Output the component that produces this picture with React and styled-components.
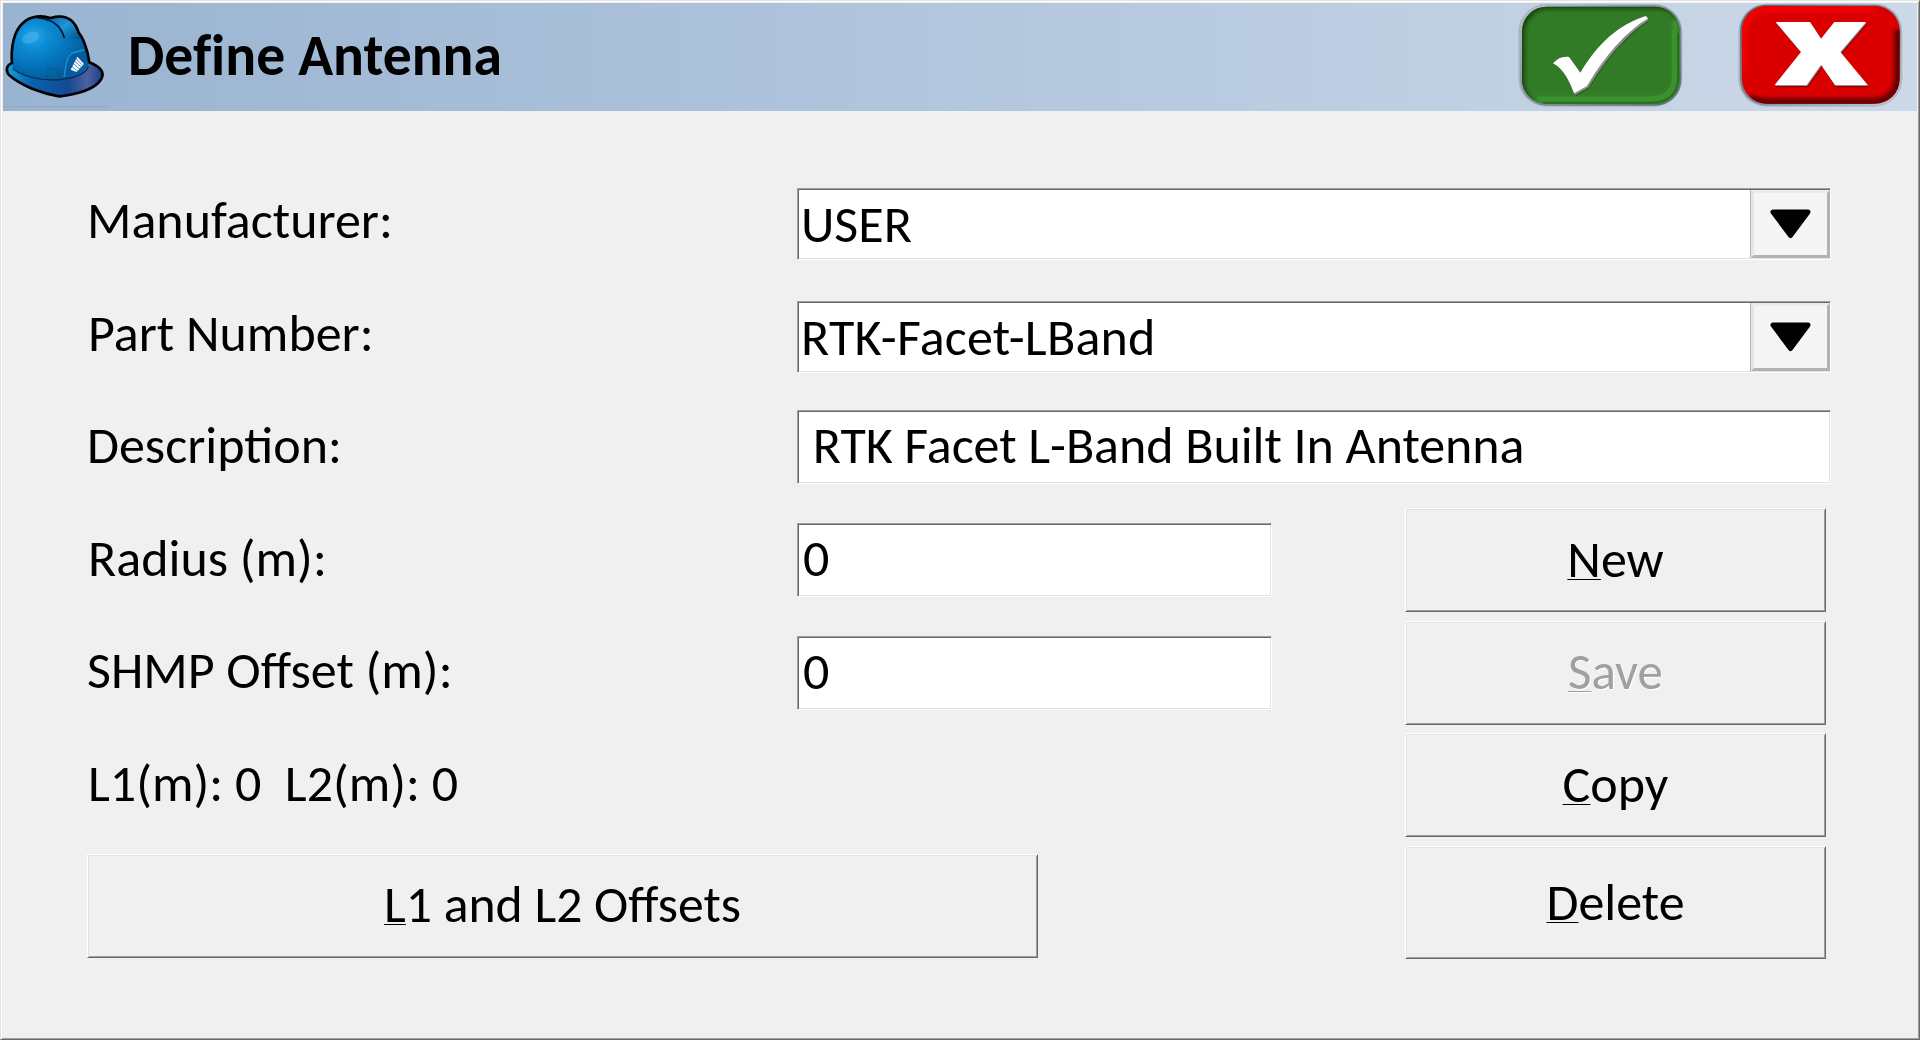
import React from "react";
import styled, { createGlobalStyle, css } from "styled-components";

const GlobalStyle = createGlobalStyle`
  *, *::before, *::after { box-sizing: border-box; }
  body {
    margin: 0;
    background: #f0f0f0;
    color: #000;
    font-family: Calibri, Carlito, Lato, sans-serif;
  }
  button, input { font: inherit; color: inherit; }
`;

const raised = css`
  border: 1px solid;
  border-color: #fff #696969 #696969 #fff;
  box-shadow: inset 1px 1px 0 #e3e3e3, inset -1px -1px 0 #a0a0a0;
`;

const sunken = css`
  border: 1px solid;
  border-color: #a0a0a0 #fff #fff #a0a0a0;
  box-shadow: inset 1px 1px 0 #696969, inset -1px -1px 0 #e3e3e3;
`;

const Window = styled.main`
  display: flex;
  flex-direction: column;
  width: 1920px;
  height: 1040px;
  padding: 2px;
  background: #f0f0f0;
  border: 1px solid;
  border-color: #e3e3e3 #696969 #696969 #e3e3e3;
  box-shadow: inset 1px 1px 0 #fff, inset -1px -1px 0 #a0a0a0;
  overflow: hidden;
`;

const TitleBar = styled.header`
  display: flex;
  flex: none;
  height: 108px;
  padding-right: 13px;
  background: linear-gradient(90deg, #99b4d1 0%, #9fb8d4 12%, #ccd9e9 100%);
`;

const Title = styled.h1`
  flex: 1;
  margin: 0 0 0 -2px;
  font-size: 57.6px;
  font-weight: 700;
  line-height: 104px;
  white-space: nowrap;
  font-variant-ligatures: none;
`;

const TitleActions = styled.div`
  display: flex;
  gap: 53px;
`;

const TitleButton = styled.button`
  display: block;
  width: 167px;
  height: 105px;
  padding: 0;
  border: 0;
  background: none;

  svg { display: block; }
`;

const Form = styled.form`
  display: flex;
  flex-direction: column;
  padding: 77px 86px 0 84px;
  font-size: 52px;
`;

const Row = styled.div`
  display: grid;
  grid-template-columns: 710px 1fr;
  align-items: start;
  height: ${(p) => p.$height}px;
`;

const Label = styled.label`
  height: ${(p) => p.$line}px;
  padding-left: ${(p) => p.$inset || 0}px;
  line-height: ${(p) => p.$line}px;
  white-space: pre;
`;

const Field = styled.div`
  ${sunken}
  display: flex;
  width: ${(p) => (p.$short ? "475px" : "100%")};
  height: ${(p) => (p.$combo ? 72 : 74)}px;
  padding: 1px 0 1px ${(p) => (p.$short ? 5 : 3)}px;
  line-height: ${(p) => (p.$combo ? 69 : 67)}px;
  background: #fff;
  white-space: pre;
`;

const Value = styled.span`
  flex: 1;
  letter-spacing: ${(p) => p.$spacing || 0}px;
`;

const DropButton = styled.button`
  display: grid;
  place-items: center;
  width: 79px;
  height: 68px;
  padding: 0;
  background: #f5f5f5;
  border: 3px solid;
  border-color: #ebebeb #b2b2b2 #b2b2b2 #e3e6ea;
  box-shadow: -1px 0 0 #b4b4b4;
`;

const Lower = styled.div`
  display: flex;
  justify-content: space-between;
  padding-right: 5px;
`;

const Details = styled.div`
  display: flex;
  flex-direction: column;
  padding-top: 15px;
`;

const Actions = styled.div`
  display: flex;
  flex-direction: column;
  gap: 9px;
  width: 421px;
`;

const PushButton = styled.button`
  ${raised}
  display: flex;
  justify-content: center;
  width: ${(p) => p.$width || 421}px;
  height: ${(p) => p.$height || 104}px;
  margin-top: ${(p) => p.$shift || 0}px;
  padding: 0;
  background: #f0f0f0;
  font-size: ${(p) => p.$size || 52}px;
  line-height: ${(p) => p.$line || 100}px;
  white-space: pre;

  &:disabled {
    color: #a0a0a0;
    text-shadow: 1px 1px 0 #fff;
  }
`;

const Key = styled.span`
  text-decoration: underline;
  text-decoration-thickness: 1px;
  text-decoration-skip-ink: none;
  text-underline-offset: 2px;
`;

const helmetOutline =
  "M36 189C18 196 16 214 28 226C62 256 122 280 178 289C230 284 284 268 302 240C316 218 304 202 268 187C264 150 248 112 236 98C226 66 204 46 172 50C162 50 156 54 150 54C128 46 92 46 68 70C42 94 32 140 36 189Z";

const HelmetIcon = () => (
  <svg width="127" height="108" viewBox="9 9 381 324" aria-hidden="true">
    <defs>
      <radialGradient id="shell" cx="0.28" cy="0.3" r="0.8">
        <stop offset="0" stopColor="#2ba6e8" />
        <stop offset="0.25" stopColor="#0c8cd4" />
        <stop offset="0.6" stopColor="#0472b9" />
        <stop offset="1" stopColor="#03548f" />
      </radialGradient>
      <linearGradient id="brim" x1="0" y1="0" x2="1" y2="0">
        <stop offset="0" stopColor="#12a0e4" />
        <stop offset="0.25" stopColor="#0b62ad" />
        <stop offset="0.65" stopColor="#154a92" />
        <stop offset="0.84" stopColor="#4f5fa2" />
        <stop offset="1" stopColor="#1d3f86" />
      </linearGradient>
      <linearGradient id="ridge" x1="0" y1="0" x2="1" y2="1">
        <stop offset="0" stopColor="#0a6aa8" />
        <stop offset="0.45" stopColor="#1c98dc" />
        <stop offset="1" stopColor="#034f88" />
      </linearGradient>
    </defs>
    <path d="M9 320H320" stroke="#8ca6c8" strokeWidth="3" />
    <path d={helmetOutline} fill="url(#brim)" />
    <path
      d="M38 192C34 140 44 96 70 72C94 50 128 50 150 57C170 50 200 50 216 70C240 104 262 150 265 190C262 212 236 226 192 236C130 246 70 232 38 206Z"
      fill="url(#shell)"
    />
    <path d="M150 56C172 50 200 52 214 68C230 88 240 104 240 116C220 118 206 110 194 114C190 90 176 66 150 56Z" fill="url(#ridge)" />
    <path d="M112 54C150 56 182 72 193 114" fill="none" stroke="#00182c" strokeWidth="5" />
    <ellipse cx="92" cy="113" rx="27" ry="16" fill="#58bdf0" opacity="0.4" transform="rotate(-22 92 113)" />
    <path d="M192 234C198 190 202 166 218 158L252 150C260 168 264 184 262 204C244 222 220 232 192 234Z" fill="#075c9f" />
    <path d="M192 232C198 190 202 166 218 159L252 150" fill="none" stroke="#1297da" strokeWidth="4" />
    <path d="M38 206C70 232 130 244 188 238C194 232 194 236 200 236C232 230 260 220 265 200" fill="none" stroke="#012b52" strokeWidth="3.5" />
    <path d="M143 236V208H178V236M70 210V228" fill="none" stroke="#05568f" strokeWidth="2.5" />
    <path d={helmetOutline} fill="none" stroke="#000" strokeWidth="8" strokeLinejoin="round" />
    <path d="M232 170L252 192L230 216L212 209Z" fill="#fff" />
    <path d="M219 190L240 208M223 182L244 202M227 175L249 197M216 200L234 214" stroke="#0a5a9c" strokeWidth="2.2" />
  </svg>
);

const AcceptIcon = () => (
  <svg width="167" height="105" viewBox="51 9 501 315" aria-hidden="true">
    <defs>
      <linearGradient id="okRim" x1="0" y1="0" x2="1" y2="1">
        <stop offset="0" stopColor="#b9c0ca" />
        <stop offset="0.45" stopColor="#8b929c" />
        <stop offset="1" stopColor="#5f6c74" />
      </linearGradient>
      <filter id="okSoft" x="-10%" y="-10%" width="120%" height="120%">
        <feGaussianBlur stdDeviation="7" />
      </filter>
      <clipPath id="okClip">
        <rect x="66" y="20" width="473" height="292" rx="74" />
      </clipPath>
    </defs>
    <rect x="55" y="12" width="492" height="308" rx="84" fill="#a9b5c5" />
    <rect x="60" y="15" width="484" height="302" rx="79" fill="url(#okRim)" />
    <rect x="66" y="20" width="473" height="292" rx="74" fill="#327b26" />
    <g clipPath="url(#okClip)">
      <rect x="62" y="14" width="494" height="318" rx="84" fill="none" stroke="#123f0c" strokeWidth="24" filter="url(#okSoft)" />
      <path d="M526 60V240Q526 300 450 300H110" fill="none" stroke="#3f9b31" strokeWidth="14" filter="url(#okSoft)" />
      <path d="M534 100V238Q530 306 454 308H130" fill="none" stroke="#27701d" strokeWidth="6" />
      <path d="M519 90V236Q516 290 450 293H110" fill="none" stroke="#3b942c" strokeWidth="5" />
    </g>
    <path
      d="M164 194C178 178 194 174 212 177L245 222C300 132 364 78 442 52L449 62C386 102 324 172 268 264L227 289C214 250 196 212 164 194Z"
      fill="#1b4d14"
      opacity="0.75"
    />
    <path d="M162 192C176 176 192 174 210 175L243 220C298 130 362 76 440 50L447 60C384 100 322 170 266 262L225 286C212 248 194 210 162 192Z" fill="#8c8c8c" />
    <path d="M159 190C173 174 189 168 207 171L241 218C294 128 360 72 437 48L444 55C380 94 316 164 261 258L222 280C209 244 191 206 159 190Z" fill="#fff" />
  </svg>
);

const crossShape = "M167 66H270L303 116L343 66H438L361 156L443 255H345L303 194L260 255H164L243 156Z";

const CancelIcon = () => (
  <svg width="167" height="105" viewBox="51 9 501 315" aria-hidden="true">
    <defs>
      <linearGradient id="noRim" x1="0" y1="0" x2="1" y2="1">
        <stop offset="0" stopColor="#59636f" />
        <stop offset="0.45" stopColor="#7d8691" />
        <stop offset="1" stopColor="#c3cad3" />
      </linearGradient>
      <filter id="noSoft" x="-10%" y="-10%" width="120%" height="120%">
        <feGaussianBlur stdDeviation="6" />
      </filter>
      <clipPath id="noClip">
        <rect x="66" y="18" width="473" height="293" rx="74" />
      </clipPath>
    </defs>
    <rect x="55" y="11" width="492" height="309" rx="84" fill="#adb8c7" />
    <rect x="60" y="14" width="483" height="303" rx="79" fill="url(#noRim)" />
    <rect x="66" y="18" width="473" height="293" rx="74" fill="#db0000" />
    <g clipPath="url(#noClip)">
      <path d="M72 210V100Q76 28 150 26H460" fill="none" stroke="#f80000" strokeWidth="16" filter="url(#noSoft)" />
      <path d="M90 292Q110 304 150 304H454Q532 300 532 230V90" fill="none" stroke="#640000" strokeWidth="19" filter="url(#noSoft)" />
      <path d="M110 302Q126 306 150 306H454Q534 302 534 230V90" fill="none" stroke="#6a0000" strokeWidth="10" />
    </g>
    <path d={crossShape} fill="#6a0000" opacity="0.6" transform="translate(4 7)" />
    <path d={crossShape} fill="#8f8f8f" transform="translate(2 3)" />
    <path d={crossShape} fill="#fff" />
  </svg>
);

const ArrowIcon = () => (
  <svg width="42" height="30" viewBox="0 0 42 30" aria-hidden="true">
    <path d="M3 3H38L20.5 26.5Z" fill="#000" stroke="#000" strokeWidth="5" strokeLinejoin="round" />
  </svg>
);

const Combo = ({ value, spacing }) => (
  <Field $combo>
    <Value $spacing={spacing}>{value}</Value>
    <DropButton type="button" aria-label="Open list">
      <ArrowIcon />
    </DropButton>
  </Field>
);

export default function App() {
  return (
    <>
      <GlobalStyle />
      <Window>
        <TitleBar>
          <HelmetIcon />
          <Title>Define Antenna</Title>
          <TitleActions>
            <TitleButton aria-label="Accept">
              <AcceptIcon />
            </TitleButton>
            <TitleButton aria-label="Cancel">
              <CancelIcon />
            </TitleButton>
          </TitleActions>
        </TitleBar>

        <Form onSubmit={(e) => e.preventDefault()}>
          <Row $height={113}>
            <Label $line={65}>Manufacturer:</Label>
            <Combo value="USER" />
          </Row>
          <Row $height={109}>
            <Label $line={65} $inset={1}>Part Number:</Label>
            <Combo value="RTK-Facet-LBand" spacing={0.2} />
          </Row>
          <Row $height={98}>
            <Label $line={70}>Description:</Label>
            <Field>
              <Value $spacing={-0.05}> RTK Facet L-Band Built In Antenna</Value>
            </Field>
          </Row>

          <Lower>
            <Details>
              <Row $height={113}>
                <Label $line={70} $inset={1}>Radius (m):</Label>
                <Field $short>
                  <Value>0</Value>
                </Field>
              </Row>
              <Row $height={113}>
                <Label $line={69}>SHMP Offset (m):</Label>
                <Field $short>
                  <Value>0</Value>
                </Field>
              </Row>
              <Label $line={69} $inset={1}>L1(m): 0  L2(m): 0</Label>
              <PushButton type="button" $width={951} $shift={36} $size={51.7}>
                <span><Key>L</Key>1 and L2 Offsets</span>
              </PushButton>
            </Details>
            <Actions>
              <PushButton type="button">
                <span><Key>N</Key>ew</span>
              </PushButton>
              <PushButton type="button" disabled $size={51}>
                <span><Key>S</Key>ave</span>
              </PushButton>
              <PushButton type="button" $shift={-1}>
                <span><Key>C</Key>opy</span>
              </PushButton>
              <PushButton type="button" $height={113} $line={110}>
                <span><Key>D</Key>elete</span>
              </PushButton>
            </Actions>
          </Lower>
        </Form>
      </Window>
    </>
  );
}
